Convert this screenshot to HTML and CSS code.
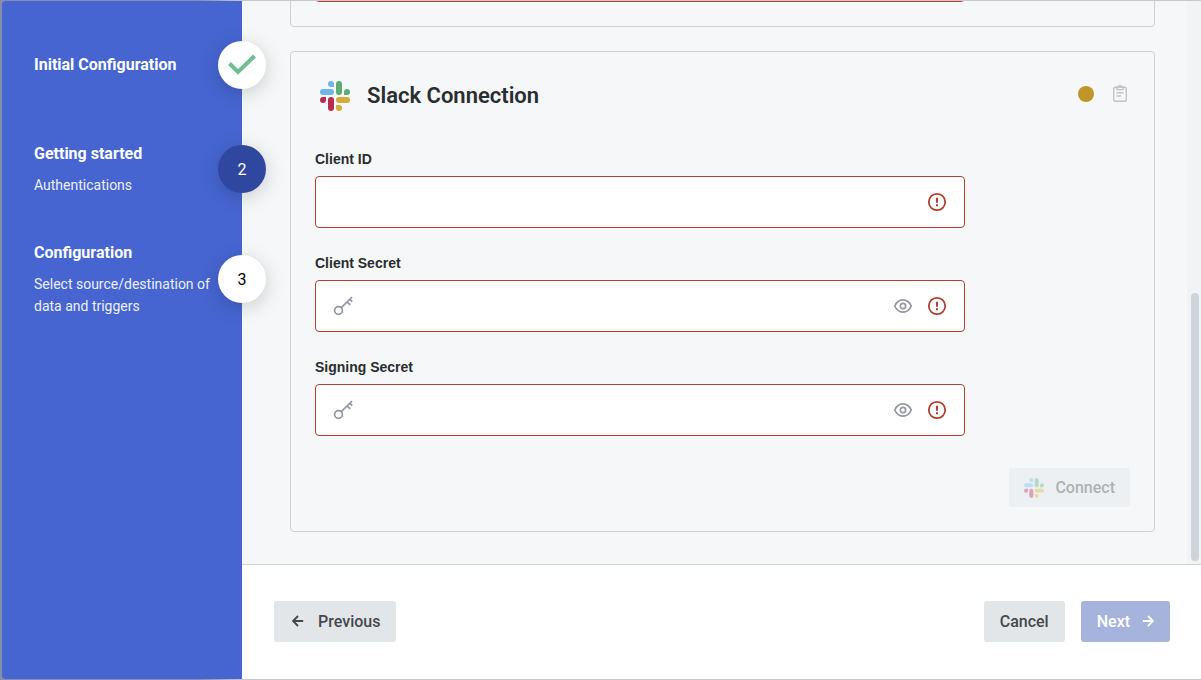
FILE: index.html
```html
<!DOCTYPE html>
<html lang="en">
  <head>
    <meta charset="UTF-8" />
    <meta name="viewport" content="width=device-width, initial-scale=1.0" />
    <title>Configuration wizard</title>
    <link rel="stylesheet" href="styles.css">
  </head>
  <body>
    <!-- Shared icons -->
    <svg class="sprite" aria-hidden="true">
      <symbol id="slack" viewBox="0 0 30 30">
        <g fill="#6fb7e9">
          <path d="M14 6V3a3 3 0 1 0-3 3z" />
          <rect x="0" y="8" width="14" height="6" rx="3" />
        </g>
        <g fill="#5fac75">
          <rect x="16" y="0" width="6" height="14" rx="3" />
          <path d="M24 14h3a3 3 0 1 0-3-3z" />
        </g>
        <g fill="#d6ab3c">
          <rect x="16" y="16" width="14" height="6" rx="3" />
          <path d="M16 24v3a3 3 0 1 0 3-3z" />
        </g>
        <g fill="#b92b50">
          <rect x="8" y="16" width="6" height="14" rx="3" />
          <path d="M6 16H3a3 3 0 1 0 3 3z" />
        </g>
      </symbol>
      <symbol id="key" viewBox="0 0 20 20">
        <g fill="none" stroke="currentColor" stroke-width="1.7">
          <circle cx="5.5" cy="14.5" r="3.9" />
          <path d="M8.3 11.7L19 1M14.200 5.800l3 3M16.800 3.200l2.400 2.400" />
        </g>
      </symbol>
      <symbol id="eye" viewBox="0 0 20 20">
        <g fill="none" stroke="currentColor" stroke-width="1.7">
          <path d="M1.8 10C3.4 6 6.4 3.8 10 3.8S16.6 6 18.2 10C16.6 14 13.6 16.2 10 16.2S3.4 14 1.8 10z" />
          <circle cx="10" cy="10" r="2.7" />
        </g>
      </symbol>
      <symbol id="alert" viewBox="0 0 20 20">
        <circle cx="10" cy="10" r="8.2" fill="none" stroke="currentColor" stroke-width="1.8" />
        <path d="M10 5.8v5M10 12.2v2" fill="none" stroke="currentColor" stroke-width="2" />
      </symbol>
      <symbol id="arrow" viewBox="0 0 12 12">
        <path d="M0.8 6h10M6 1L11 6 6 11" fill="none" stroke="currentColor" stroke-width="1.9" />
      </symbol>
    </svg>

    <nav class="sidebar">
      <ol class="steps">
        <li class="step done">
          <div class="step-text">
            <h2>Initial Configuration</h2>
          </div>
          <span class="bubble">
            <svg width="28" height="22" viewBox="0 0 28 22" role="img" aria-label="Done">
              <path d="M1.5 9.5L10 18 26.5 2" fill="none" stroke="#6fbe92" stroke-width="4" />
            </svg>
          </span>
        </li>
        <li class="step current">
          <div class="step-text">
            <h2>Getting started</h2>
            <p>Authentications</p>
          </div>
          <span class="bubble">2</span>
        </li>
        <li class="step">
          <div class="step-text">
            <h2>Configuration</h2>
            <p>Select source/destination of data and triggers</p>
          </div>
          <span class="bubble">3</span>
        </li>
      </ol>
    </nav>

    <main class="main">
      <div class="viewport">
        <div class="cards">
          <section class="card">
            <div class="box">
              <input type="text" aria-label="Token" />
            </div>
          </section>

          <section class="card">
            <header class="card-header">
              <svg class="logo"><use href="#slack" /></svg>
              <h1>Slack Connection</h1>
              <div class="card-tools">
                <span class="status"></span>
                <button class="copy" type="button" aria-label="Copy">
                  <svg width="14" height="17" viewBox="0 0 14 17" fill="none" stroke="currentColor" stroke-width="1.4">
                    <rect x="0.7" y="2.2" width="12.6" height="14" rx="1.8" />
                    <path d="M4 2.2V4.6h6V2.2H8.8a1.8 1.5 0 0 0-3.6 0z" />
                    <path d="M3.5 7.8h7M3.500 11h4.500" />
                  </svg>
                </button>
              </div>
            </header>

            <form>
              <div class="field">
                <label for="client-id">Client ID</label>
                <div class="box">
                  <input type="text" id="client-id" />
                  <svg class="icon alert"><use href="#alert" /></svg>
                </div>
              </div>
              <div class="field">
                <label for="client-secret">Client Secret</label>
                <div class="box">
                  <svg class="icon"><use href="#key" /></svg>
                  <input type="password" id="client-secret" />
                  <button type="button" aria-label="Show client secret"><svg class="icon"><use href="#eye" /></svg></button>
                  <svg class="icon alert"><use href="#alert" /></svg>
                </div>
              </div>
              <div class="field">
                <label for="signing-secret">Signing Secret</label>
                <div class="box">
                  <svg class="icon"><use href="#key" /></svg>
                  <input type="password" id="signing-secret" />
                  <button type="button" aria-label="Show signing secret"><svg class="icon"><use href="#eye" /></svg></button>
                  <svg class="icon alert"><use href="#alert" /></svg>
                </div>
              </div>
              <div class="connect-row">
                <button class="btn connect" type="submit" disabled>
                  <svg width="20" height="20"><use href="#slack" /></svg>
                  Connect
                </button>
              </div>
            </form>
          </section>
        </div>
        <div class="scrollbar"><div class="thumb"></div></div>
      </div>

      <footer class="footer">
        <button class="btn previous" type="button">
          <svg class="arrow back"><use href="#arrow" /></svg>
          Previous
        </button>
        <button class="btn" type="button">Cancel</button>
        <button class="btn next" type="button" disabled>
          Next
          <svg class="arrow"><use href="#arrow" /></svg>
        </button>
      </footer>
    </main>
  </body>
</html>
```
FILE: styles.css
```css
* {
  box-sizing: border-box;
}
body {
  margin: 0;
  padding: 1px 0 1px 2px;
  height: 100vh;
  display: flex;
  overflow: hidden;
  background-color: #c6c8cd;
  background-image: linear-gradient(90deg, #858eab 200px, #c6c8cd 242px);
  font-family: Roboto, sans-serif;
  color: #2a2d30;
}
h1,
h2,
p,
ol {
  margin: 0;
  padding: 0;
}
svg {
  display: block;
  flex: none;
}
button {
  font: inherit;
  border: none;
  padding: 0;
  background: none;
  cursor: pointer;
}
.sprite {
  position: absolute;
  width: 0;
  height: 0;
}

/* Sidebar */
.sidebar {
  flex: none;
  width: 240px;
  padding: 40px 0 0 32px;
  background-color: #4665d0;
  border-radius: 4px 0 0 4px;
  color: #fff;
  z-index: 1;
}
.steps {
  list-style: none;
}
.step {
  display: flex;
  align-items: center;
  margin-right: -24px;
}
.step.done {
  margin-bottom: 53px;
}
.step.current {
  margin-bottom: 45px;
}
.step-text {
  width: 184px;
  flex: none;
}
.step h2 {
  font-size: 16px;
  line-height: 24px;
  font-weight: 700;
}
.step p {
  font-size: 14px;
  line-height: 22px;
  margin-top: 8px;
  opacity: 0.9;
}
.bubble {
  width: 48px;
  height: 48px;
  flex: none;
  display: flex;
  align-items: center;
  justify-content: center;
  border-radius: 50%;
  background-color: #fff;
  color: #000;
  font-size: 16px;
  box-shadow: 0 4px 20px rgba(0, 0, 0, 0.18);
}
.current .bubble {
  background-color: #2f479f;
  color: #fff;
}

/* Content */
.main {
  flex: 1;
  min-width: 0;
  display: flex;
  flex-direction: column;
  background-color: #fff;
}
.viewport {
  flex: 1;
  min-height: 0;
  display: flex;
  background-color: #f5f7f9;
  border-bottom: 1px solid #cfd1d6;
}
.cards {
  flex: 1;
  min-width: 0;
  display: flex;
  flex-direction: column;
  justify-content: flex-end;
  gap: 24px;
  padding: 0 32px 32px 48px;
  overflow: hidden;
}
.card {
  flex: none;
  padding: 24px;
  border: 1px solid #cdd0d5;
  border-radius: 4px;
}
.card-header {
  display: flex;
  align-items: center;
  height: 40px;
  padding: 0 3px 0 5px;
  margin-bottom: 32px;
}
.logo {
  width: 30px;
  height: 30px;
  margin-right: 17px;
}
.card-header h1 {
  flex: 1;
  font-size: 22px;
  line-height: 32px;
  font-weight: 600;
}
.card-tools {
  display: flex;
  align-items: center;
  align-self: flex-start;
  gap: 19px;
  height: 35px;
}
.status {
  width: 16px;
  height: 16px;
  border-radius: 50%;
  background-color: #c0952a;
}
.copy {
  color: #c0c2c4;
}
.field {
  margin-bottom: 24px;
}
.field label {
  display: block;
  margin-bottom: 6px;
  font-family: "Liberation Sans", Arial, sans-serif;
  font-size: 14px;
  line-height: 22px;
  font-weight: bold;
}
.box {
  display: flex;
  align-items: center;
  width: 650px;
  max-width: 100%;
  height: 52px;
  padding: 0 17px;
  background-color: #fff;
  border: 1px solid #b0402f;
  border-radius: 4px;
}
.box input {
  flex: 1;
  min-width: 0;
  padding: 0 12px;
  border: none;
  outline: none;
  background: none;
  font-size: 16px;
}
.icon {
  width: 20px;
  height: 20px;
  color: #9295a3;
}
.alert {
  margin-left: 14px;
  color: #b0402f;
}
.connect-row {
  display: flex;
  justify-content: flex-end;
  margin-top: 32px;
}
.scrollbar {
  width: 14px;
  display: flex;
  flex-direction: column;
  justify-content: flex-end;
  padding: 2px 2px 3px 4px;
  background-color: #f1f3f5;
}
.thumb {
  height: 48%;
  border-radius: 4px;
  background-color: #ced4d9;
}

/* Buttons */
.btn {
  display: flex;
  align-items: center;
  height: 41px;
  padding: 0 16px;
  border-radius: 3px;
  background-color: #e2e6e9;
  color: #44484c;
  font-size: 16px;
  font-weight: 500;
}
.connect {
  gap: 11px;
  height: 39px;
  padding: 0 15px;
  opacity: 0.4;
}
.next {
  gap: 12px;
  background-color: #a6b3dc;
  color: #fff;
}
.arrow {
  width: 12px;
  height: 12px;
}
.back {
  transform: scaleX(-1);
}
.footer {
  display: flex;
  align-items: center;
  gap: 16px;
  height: 114px;
  padding: 0 31px 2px 32px;
}
.previous {
  gap: 14px;
  padding-left: 18px;
  margin-right: auto;
}
```
